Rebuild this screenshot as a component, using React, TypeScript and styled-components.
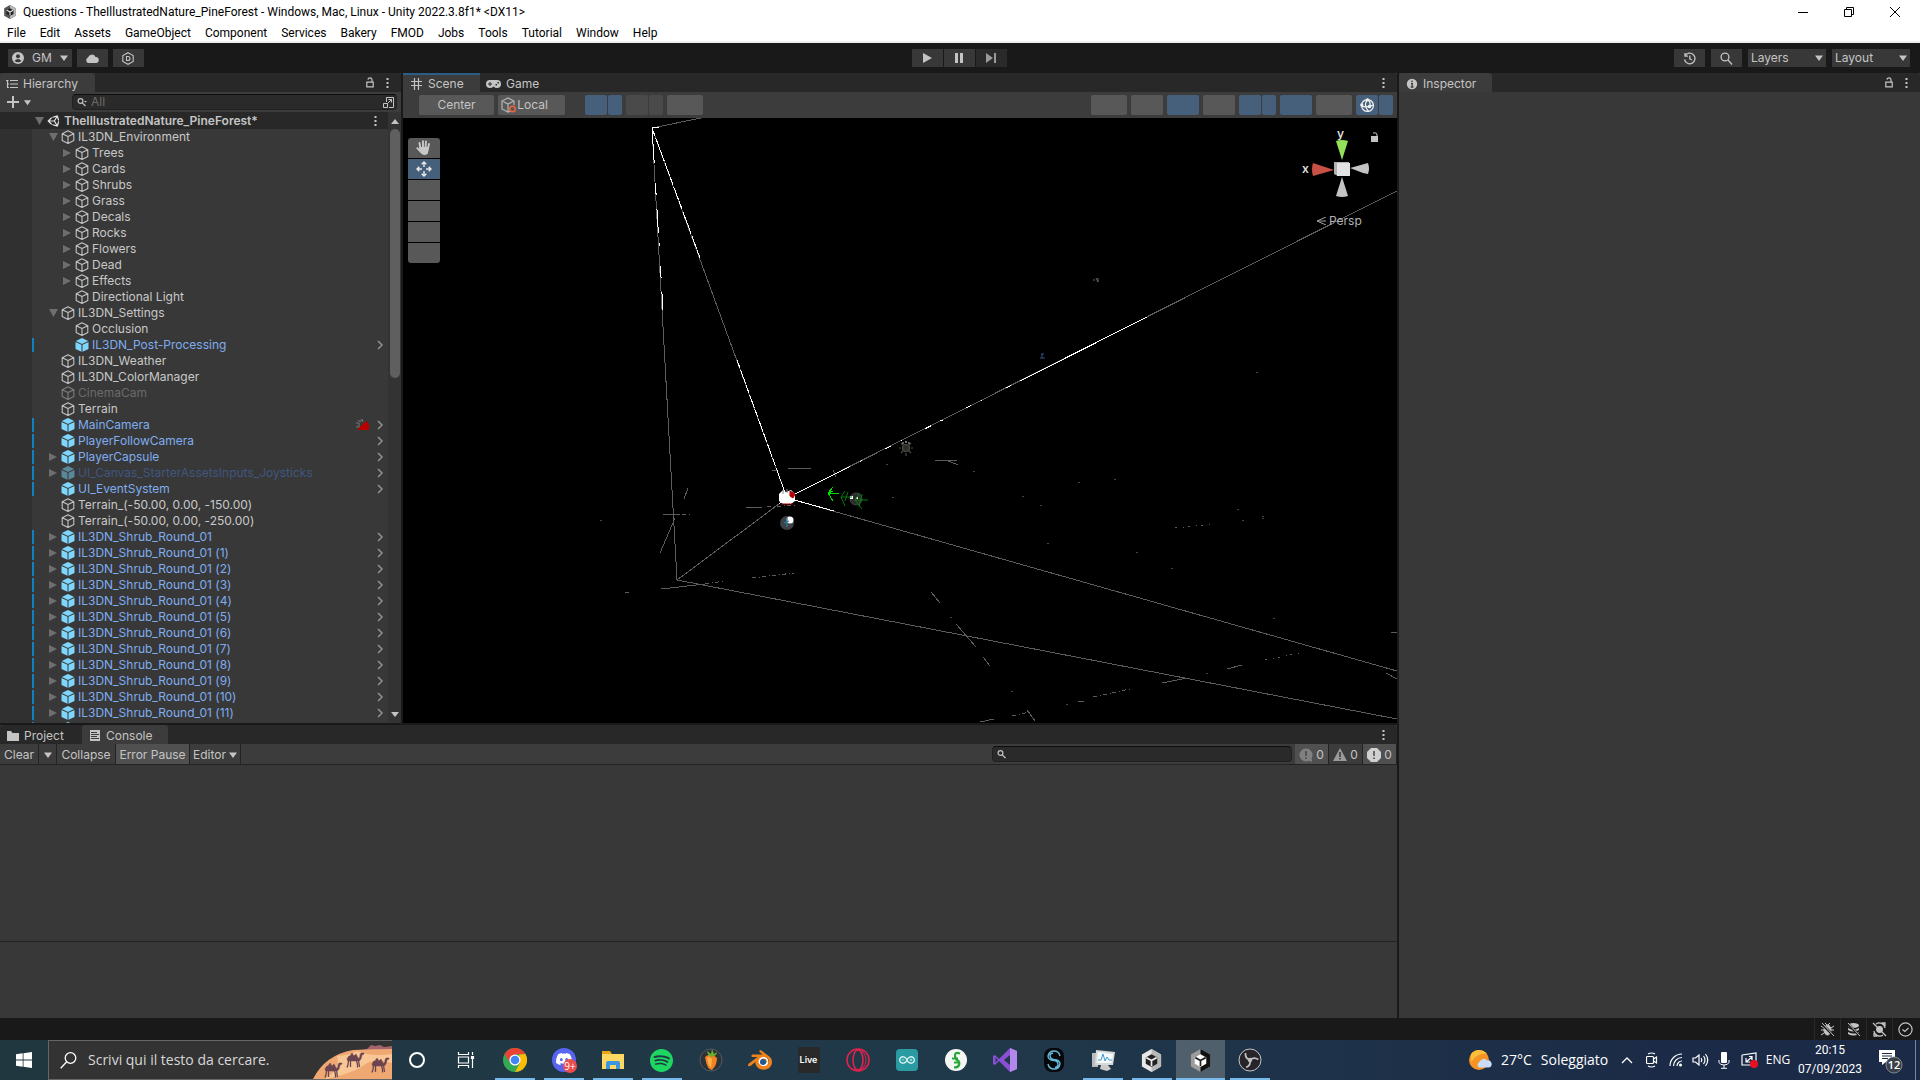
import React from "react";
import styled, { createGlobalStyle, css } from "styled-components";
import { FaUnity } from "react-icons/fa";
import { SiSpotify, SiBlender, SiArduino, SiDiscord } from "react-icons/si";

const ui = `Inter, "Liberation Sans", sans-serif`;
const win = `"Open Sans", "Noto Sans", sans-serif`;
const winSmall = `Roboto, "Open Sans", sans-serif`;

const GlobalStyle = createGlobalStyle`
  * { box-sizing: border-box; }
  body { margin: 0; background: #191919; overflow: hidden; }
  button, input, select { font: inherit; color: inherit; border: 0; margin: 0; padding: 0; background: none; border-radius: 0; }
  svg { display: block; flex: none; }
  ul { list-style: none; margin: 0; padding: 0; }
`;

const Shell = styled.div`
  display: flex;
  flex-direction: column;
  height: 100vh;
  font: 12px/16px ${ui};
  font-feature-settings: "calt" 0;
  color: #c4c4c4;
  background: #191919;
`;

/* ---------- window chrome ---------- */
const TitleBar = styled.header`
  display: flex;
  align-items: center;
  height: 23px;
  flex: none;
  background: #fff;
  color: #000;
  font: 12px/16px ${winSmall};
  padding: 0 2px 0 3px;
  gap: 6px;
`;
const TitleText = styled.span`
  flex: 1;
  white-space: nowrap;
`;
const WindowButton = styled.button`
  width: 46px;
  height: 20px;
  display: grid;
  place-items: center;
`;
const MenuBar = styled.nav`
  display: flex;
  align-items: center;
  height: 20px;
  flex: none;
  background: #fff;
  border-bottom: 2px solid #f0f0f0;
  color: #000;
  font: 12px/18px ${winSmall};
`;
const MenuItem = styled.button`
  padding: 1px 7px 0;
  height: 18px;
`;

/* ---------- top toolbar ---------- */
const TopBar = styled.div`
  display: grid;
  grid-template-columns: 1fr auto 1fr;
  align-items: center;
  height: 30px;
  flex: none;
  padding: 0 10px 0 8px;
`;
const Group = styled.div<{ $gap?: number; $end?: boolean }>`
  display: flex;
  align-items: center;
  gap: ${(p) => p.$gap ?? 5}px;
  justify-content: ${(p) => (p.$end ? "flex-end" : "flex-start")};
`;
const BarButton = styled.button<{ $dim?: boolean }>`
  display: flex;
  align-items: center;
  justify-content: center;
  gap: 8px;
  height: 18px;
  min-width: 31px;
  padding: 0 4px;
  background: ${(p) => (p.$dim ? "#2a2a2a" : "#383838")};
  color: ${(p) => (p.$dim ? "#9a9a9a" : "#c4c4c4")};
`;
const SelectWrap = styled.label`
  position: relative;
  display: flex;
  align-items: center;
  width: 78px;
  height: 18px;
  background: #383838;
  select {
    appearance: none;
    width: 100%;
    padding-left: 3px;
    height: 18px;
    outline: none;
  }
  svg {
    position: absolute;
    right: 3px;
    pointer-events: none;
  }
`;

/* ---------- docking ---------- */
const Workspace = styled.main`
  flex: 1;
  min-height: 0;
  display: grid;
  grid-template-columns: minmax(0, 1397fr) minmax(0, 521fr);
  gap: 2px;
`;
const LeftArea = styled.div`
  display: grid;
  grid-template-rows: minmax(0, 650fr) minmax(0, 293fr);
  gap: 2px;
  min-height: 0;
`;
const UpperArea = styled.div`
  display: grid;
  grid-template-columns: minmax(0, 401fr) minmax(0, 994fr);
  gap: 2px;
  min-height: 0;
`;
const Panel = styled.section`
  display: flex;
  flex-direction: column;
  min-height: 0;
  min-width: 0;
  background: #383838;
`;
const TabStrip = styled.div`
  display: flex;
  height: 19px;
  flex: none;
  background: #282828;
  border-radius: 3px 3px 0 0;
  padding-right: 12px;
`;
const Tab = styled.button<{ $active?: boolean; $focus?: boolean; $w: number }>`
  display: flex;
  align-items: center;
  gap: 5px;
  width: ${(p) => p.$w}px;
  padding: 2px 0 0 6px;
  border-radius: 3px 3px 0 0;
  ${(p) => p.$active && css`background: #3c3c3c;`}
  ${(p) => p.$focus && css`border-top: 2px solid #2c5d87; border-radius: 0; padding-top: 0;`}
`;
const TabActions = styled.div`
  margin-left: auto;
  display: flex;
  align-items: center;
  gap: 12px;
`;
const IconButton = styled.button`
  display: grid;
  place-items: center;
  flex: none;
`;
const ToolRow = styled.div<{ $h: number }>`
  display: flex;
  align-items: center;
  height: ${(p) => p.$h}px;
  flex: none;
  background: #3c3c3c;
`;

/* ---------- hierarchy ---------- */
const AddButton = styled.button`
  display: flex;
  align-items: center;
  gap: 5px;
  width: 72px;
  padding-left: 7px;
  flex: none;
`;
const SearchField = styled.label<{ $h: number }>`
  display: flex;
  align-items: center;
  gap: 4px;
  height: ${(p) => p.$h}px;
  padding: 0 2px 0 4px;
  border: 1px solid #212121;
  border-top-color: #0d0d0d;
  border-radius: 4px;
  background: #2a2a2a;
  input {
    flex: 1;
    min-width: 0;
    height: 14px;
    outline: none;
  }
  input::placeholder {
    color: #6c6c6c;
    opacity: 1;
  }
`;
const HierarchySearch = styled(SearchField)`
  flex: 1;
  margin-right: 4px;
`;
const TreeArea = styled.div`
  flex: 1;
  min-height: 0;
  display: grid;
  grid-template-columns: minmax(0, 1fr) 13px;
`;
const Tree = styled.ul`
  overflow: hidden;
  min-height: 0;
  background: linear-gradient(to right, #303030 32px, #383838 32px);
`;
const SceneHeader = styled.li`
  display: flex;
  align-items: center;
  height: 17px;
  padding: 1px 0 0 32px;
  background: #282828;
  font-weight: 600;
`;
const Row = styled.li<{ $level: number; $prefab: boolean; $off?: boolean }>`
  display: flex;
  align-items: center;
  height: 16px;
  margin-left: 32px;
  padding-left: ${(p) => 14 + p.$level * 14}px;
  color: ${(p) => (p.$prefab ? (p.$off ? "#415680" : "#7fadef") : p.$off ? "#6a6a6a" : "#c8c8c8")};
  ${(p) => p.$prefab && css`background: linear-gradient(#0f81be, #0f81be) 0 1px / 2px 14px no-repeat;`}
`;
const Foldout = styled.button`
  width: 14px;
  height: 16px;
  padding-left: 3px;
  display: flex;
  align-items: center;
  flex: none;
`;
const RowIcon = styled.span<{ $off?: boolean }>`
  width: 18px;
  padding-left: 1px;
  flex: none;
  opacity: ${(p) => (p.$off ? 0.5 : 1)};
`;
const RowText = styled.span`
  flex: 1;
  white-space: nowrap;
`;
const RowEnd = styled.span`
  display: flex;
  align-items: center;
  gap: 6px;
  padding-right: 4px;
`;
const SceneMenu = styled(IconButton)`
  padding-right: 7px;
`;
const ScrollTrack = styled.div`
  display: flex;
  flex-direction: column;
  align-items: center;
  background: #333;
  padding: 7px 0 6px;
  min-height: 0;
`;
const ScrollBody = styled.div`
  flex: 1;
  margin: 5px 0;
`;
const Thumb = styled.div`
  width: 10px;
  height: 43%;
  border-radius: 5px;
  background: #5f5f5f;
`;

/* ---------- scene ---------- */
const SceneTools = styled(ToolRow)`
  padding: 0 4px 0 16px;
  gap: 4px;
`;
const Space = styled.span<{ $w?: number }>`
  ${(p) => (p.$w ? css`width: ${p.$w}px;` : css`flex: 1;`)}
`;
const SceneButton = styled.button<{ $w: number; $tone?: "blue" | "dim" }>`
  display: flex;
  align-items: center;
  justify-content: center;
  width: ${(p) => p.$w}px;
  height: 20px;
  border-radius: 2px;
  background: ${(p) => (p.$tone === "blue" ? "#46607c" : p.$tone === "dim" ? "#4a4a4a" : "#585858")};
  flex: none;
`;
const Split = styled.div`
  display: flex;
  gap: 1px;
`;
const Viewport = styled.div`
  position: relative;
  flex: 1;
  min-height: 0;
  background: #000;
  overflow: hidden;
`;
const SceneDrawing = styled.svg`
  width: 100%;
  height: 100%;
`;
const ToolPalette = styled.div`
  position: absolute;
  left: 5px;
  top: 20px;
  display: grid;
  gap: 1px;
  border-radius: 3px;
  overflow: hidden;
`;
const PaletteButton = styled.button<{ $on?: boolean }>`
  display: grid;
  place-items: center;
  width: 32px;
  height: 20px;
  background: ${(p) => (p.$on ? "#46607c" : "#585858")};
`;
const Gizmo = styled.div`
  position: absolute;
  right: 12px;
  top: 4px;
  width: 84px;
`;
const ProjectionButton = styled.button`
  display: flex;
  align-items: center;
  gap: 3px;
  margin: 7px 0 0 15px;
  color: #b4b4b4;
`;

/* ---------- console ---------- */
const ConsoleTools = styled(ToolRow)`
  border-bottom: 1px solid #232323;
`;
const ConsoleButton = styled.button<{ $w: number; $on?: boolean }>`
  display: flex;
  align-items: center;
  justify-content: center;
  gap: 3px;
  width: ${(p) => p.$w}px;
  height: 20px;
  padding-top: 1px;
  border-right: 1px solid #232323;
  background: ${(p) => (p.$on ? "#505050" : "transparent")};
  flex: none;
`;
const ConsoleSearch = styled(SearchField)`
  width: 300px;
  margin: 0 3px 0 auto;
`;
const ConsoleBody = styled.div`
  flex: 1;
  display: grid;
  grid-template-rows: 177fr 76fr;
`;
const ConsoleList = styled.div`
  border-bottom: 1px solid #232323;
`;

/* ---------- status bar ---------- */
const StatusBar = styled.footer`
  display: flex;
  justify-content: flex-end;
  height: 22px;
  padding-right: 2px;
  flex: none;
`;
const StatusButton = styled.button`
  width: 26px;
  display: grid;
  place-items: center;
  border-left: 1px solid #2a2a2a;
`;

/* ---------- taskbar ---------- */
const Taskbar = styled.div`
  display: flex;
  align-items: stretch;
  height: 40px;
  flex: none;
  color: #fff;
  background: linear-gradient(to right, #21373f, #20394a 50%, #1b2a47 90%);
  font: 14px/20px ${win};
`;
const StartButton = styled.button`
  width: 48px;
  display: grid;
  place-items: center;
`;
const TaskSearch = styled.label`
  display: flex;
  align-items: center;
  width: 344px;
  padding-left: 11px;
  gap: 11px;
  background: #333;
  border: 1px solid #666;
  border-right: 0;
  input {
    flex: 1;
    min-width: 0;
    outline: none;
  }
  input::placeholder {
    color: #d8d8d8;
    opacity: 1;
  }
`;
const TaskButton = styled.button<{ $open?: boolean; $active?: boolean }>`
  width: 49px;
  display: grid;
  place-items: center;
  ${(p) =>
    p.$open &&
    css`
      background: linear-gradient(#76b9ed, #76b9ed) bottom / ${p.$active ? "100%" : "40px"} 2px no-repeat,
        ${p.$active ? "#4f5f6b" : "transparent"};
    `}
`;
const Tray = styled.div`
  display: flex;
  align-items: center;
  margin-left: auto;
`;
const Weather = styled.button`
  display: flex;
  align-items: center;
  gap: 9px;
  width: 145px;
`;
const TrayButton = styled.button<{ $w: number }>`
  width: ${(p) => p.$w}px;
  display: grid;
  place-items: center;
  font-size: 12px;
`;
const Clock = styled.button`
  width: 72px;
  font: 12px/19px ${winSmall};
  text-align: center;
`;
const Notice = styled.button`
  width: 42px;
  margin: 0 3px 0 4px;
  display: grid;
  place-items: center;
`;
const DesktopEdge = styled.div`
  width: 5px;
  align-self: stretch;
  border-left: 1px solid #7b8494;
`;

/* ---------- shared icons ---------- */
const Down = ({ s = 8, c = "#c4c4c4" }: { s?: number; c?: string }) => (
  <svg width={s} height={s} viewBox="0 0 8 8"><path d="M0 1.500h8L4 7z" fill={c} /></svg>
);
const Right = () => (
  <svg width="8" height="8" viewBox="0 0 8 8"><path d="M0 0v8l8-4z" fill="#6e6e6e" /></svg>
);
const DownFold = () => (
  <svg width="9" height="8" viewBox="0 0 9 8"><path d="M0 0h9L4.500 8z" fill="#6e6e6e" /></svg>
);
const Kebab = () => (
  <svg width="3" height="12" viewBox="0 0 3 12" fill="#c4c4c4"><path d="M.5 1h2v2h-2zM.5 5h2v2h-2zM.5 9h2v2h-2z" /></svg>
);
const Lock = () => (
  <svg width="8" height="11" viewBox="0 0 8 11" fill="none" stroke="#c4c4c4" strokeWidth="1.200">
    <path d="M.8 5.200h6.400v4.600H.8zM6 5V3a2 2 0 0 0-4-.4" />
  </svg>
);
const Cube = () => (
  <svg width="14" height="16" viewBox="0 0 14 16" fill="none" stroke="#c4c4c4" strokeWidth="1.100" strokeLinejoin="round">
    <path d="M7 1.800l5.800 2.900v6.700L7 14.400l-5.800-3V4.700zM1.200 4.700L7 7.600l5.800-2.900M7 7.600v6.800" />
  </svg>
);
const PrefabCube = () => (
  <svg width="14" height="16" viewBox="0 0 14 16">
    <path d="M7 1l6.200 3L7 7 .8 4z" fill="#7fd6fd" />
    <path d="M.5 5l6 2.800v7L.5 12z M13.500 5l-6 2.800v7l6-2.800z" fill="#7fd6fd" />
  </svg>
);
const Chevron = () => (
  <svg width="8" height="10" viewBox="0 0 8 10" fill="none" stroke="#909090" strokeWidth="1.500"><path d="M2 1l4 4-4 4" /></svg>
);
const Magnifier = ({ arrow }: { arrow?: boolean }) => (
  <svg width="10" height="10" viewBox="0 0 10 10" fill="none" stroke="#c4c4c4" strokeWidth="1.200">
    <circle cx="3.500" cy="4" r="2.400" /><path d="M5.300 5.800L8.500 9" />{arrow && <path d="M7 4h3L8.500 5.600z" fill="#c4c4c4" stroke="none" />}
  </svg>
);
const UnityHex = ({ s, light = "#e8e8e8", dark = "#222", flip }: { s: number; light?: string; dark?: string; flip?: boolean }) => (
  <svg width={s} height={s} viewBox="0 0 24 24">
    <path d="M12 0l10 5.700v12.600L12 24 2 18.300V5.700z" fill={flip ? "#9c9c9c" : light} />
    <path d="M12 0l10 5.700v12.600L12 24z" fill={flip ? "#111" : "#b8b8b8"} />
    <path d="M12 5.500l6 3.300v6.600L12 18.800l-6-3.400V8.800z" fill={flip ? "#fff" : dark} />
    <path d="M12 12v6M12 12L6.600 9M12 12l5.400-3" stroke={flip ? "#222" : "#e8e8e8"} strokeWidth="1.800" />
  </svg>
);

/* ---------- data ---------- */
type Item = { t: string; l?: number; f?: "open" | "closed"; k?: "prefab"; off?: boolean; cam?: boolean };
const shrubs: Item[] = Array.from({ length: 12 }, (_, i) => ({
  t: "IL3DN_Shrub_Round_01" + (i ? ` (${i})` : ""), f: "closed", k: "prefab",
}));
const items: Item[] = [
  { t: "IL3DN_Environment", f: "open" },
  ...["Trees", "Cards", "Shrubs", "Grass", "Decals", "Rocks", "Flowers", "Dead", "Effects"].map(
    (t): Item => ({ t, l: 1, f: "closed" })
  ),
  { t: "Directional Light", l: 1 },
  { t: "IL3DN_Settings", f: "open" },
  { t: "Occlusion", l: 1 },
  { t: "IL3DN_Post-Processing", l: 1, k: "prefab" },
  { t: "IL3DN_Weather" },
  { t: "IL3DN_ColorManager" },
  { t: "CinemaCam", off: true },
  { t: "Terrain" },
  { t: "MainCamera", k: "prefab", cam: true },
  { t: "PlayerFollowCamera", k: "prefab" },
  { t: "PlayerCapsule", k: "prefab", f: "closed" },
  { t: "UI_Canvas_StarterAssetsInputs_Joysticks", k: "prefab", f: "closed", off: true },
  { t: "UI_EventSystem", k: "prefab" },
  { t: "Terrain_(-50.00, 0.00, -150.00)" },
  { t: "Terrain_(-50.00, 0.00, -250.00)" },
  ...shrubs,
];
const menus = ["File", "Edit", "Assets", "GameObject", "Component", "Services", "Bakery", "FMOD", "Jobs", "Tools", "Tutorial", "Window", "Help"];

const dots = [
  [950, 617], [1011, 691], [1066, 704], [1206, 673], [1242, 520], [1262, 516], [1262, 518], [1237, 509], [1136, 552],
  [1171, 568], [1047, 543], [1040, 505], [1022, 496], [973, 471], [886, 464], [892, 497], [1078, 482], [1114, 479],
  [1273, 618], [1256, 372], [600, 520],
];

function SceneLines() {
  return (
    <SceneDrawing viewBox="403 118 994 605" preserveAspectRatio="xMinYMin slice" aria-label="Scene view" fill="none">
      <g shapeRendering="crispEdges" stroke="#5c5c5c" strokeWidth="1">
        <path d="M652 128L701 118M652 128L677 580M652 128L787 498M677 580L787 498M677 580L1397 719M787 498L1397 671M787 498L1397 191" />
        <path d="M772 470h6M788 469l23-1M688 488l-4 11M746 508l16-1M663 515l17-1M675 518l-15 35M661 589l44-5M625 592h4M931 592l9 11M956 624l20 23M983 657l7 9M980 722l14-3M1027 710l8 11M1078 702l6-1M1162 683l25-5M1227 669l15-4M1386 673l11 6M1391 632h6M935 460h22M946 460l12 5M833 470l3 7" />
        <path strokeDasharray="4 3 1 2" d="M767 507l30-2M682 514h9M705 584l19-3M752 578l42-5M1012 716l18-4M1093 697l37-8" />
        <path strokeDasharray="2 6 1 4" d="M1265 660l34-7M1175 528l37-4" />
      </g>
      <g shapeRendering="crispEdges" stroke="#fff" strokeWidth="1">
        <path d="M652 128L654 160M652 128L659 127M783 501L779 504M787 498L845 469M787 498L834 511M1020 381L1147 317" />
        <path d="M654 160L663 310" strokeDasharray="3 20 12 14 24 10" />
        <path d="M652 128L700 258M737 360L787 498" strokeDasharray="9 2 14 1" />
        <path d="M845 469L1020 381" strokeDasharray="6 11 2 26" />
      </g>
      <g fill="#444" shapeRendering="crispEdges">
        {dots.map(([x, y]) => <rect key={`${x}-${y}`} x={x} y={y} width="2" height="1" />)}
      </g>
      <path d="M779 494l4-4 3 2 5-2 4 4v7l-4 3h-8l-4-3z" fill="#fff" />
      <path d="M790 491l5 3-2 4-3-2zM781 504h12" fill="#b00" stroke="#a00" />
      <path d="M783 490v4M787 489v4" stroke="#888" />
      <circle cx="787" cy="523" r="7" fill="#3d4145" />
      <circle cx="790" cy="520" r="3.500" fill="#fff" />
      <path d="M787 518v9M784 523l5-2" stroke="#2b7da5" strokeWidth="1.300" />
      <g stroke="#4c4c48" strokeWidth="1.200">
        <circle cx="906" cy="448" r="3.500" fill="#2e2e26" /><path d="M906 441v2M906 453v3M899 448h2M911 448h2M901 443l2 2M911 443l-2 2M901 453l2-2M911 453l-2-2" />
        <path d="M902 443h2M905 442h2M908 443h2" stroke="#bbb" />
      </g>
      <circle cx="856" cy="499" r="6" fill="#2c2c2c" stroke="#444" />
      <path d="M850 496h3v3h-3zM856 497h2v2h-2z" fill="#fff" />
      <path d="M839 493H828M833 487l-5 6 5 8M828 493l5-2" stroke="#0d0" strokeWidth="1" shapeRendering="crispEdges" />
      <path d="M852 497H841M845 491l-4 6 4 9M868 500H855M860 493l-5 7 7 9M848 492l-3 9M862 494l-3 13" stroke="#087a10" />
      <path d="M1093 280h2M1096 278l2 4M1098 278v4" stroke="#666" />
      <path d="M1041 354h3M1042 354v4M1040 358h5" stroke="#2d5585" />
    </SceneDrawing>
  );
}

function AxisGizmo() {
  return (
    <Gizmo>
      <svg width="84" height="84" viewBox="1301 122 84 84" aria-label="Orientation">
        <path d="M1336 141q6-2 12 0l-6 19z" fill="#93e05a" />
        <path d="M1313 163q-2 6 0 13l21-6z" fill="#c75145" />
        <path d="M1368 163q2 6 0 11l-5-1-13-5z" fill="#c4c4c4" />
        <path d="M1336 196q6 2 12 0l-6-19z" fill="#c4c4c4" />
        <path d="M1334 162h15l1 14h-12l-4-2z" fill="#b0b0b0" /><path d="M1337 163h13v13h-13z" fill="#e2e2e4" />
        <text x="1337" y="138" fill="#ddd" fontSize="12" fontWeight="600">y</text>
        <text x="1302" y="173" fill="#ddd" fontSize="12" fontWeight="600">x</text>
        <path d="M1371 136h7v6h-7z" fill="#c4c4c4" /><path d="M1377 136v-2q-2-2-4-1" fill="none" stroke="#c4c4c4" />
      </svg>
      <ProjectionButton>
        <svg width="10" height="8" viewBox="0 0 10 8" fill="none" stroke="#a0a0a0"><path d="M10 0L1 4h9M1 4l9 4" /></svg>
        Persp
      </ProjectionButton>
    </Gizmo>
  );
}

const Chrome = () => (
  <svg width="24" height="24" viewBox="0 0 24 24">
    <circle cx="12" cy="12" r="12" fill="#34a853" />
    <path d="M1.600 6A12 12 0 0 1 22.400 6L12 6.500 7 9l-.5 5z" fill="#ea4335" />
    <path d="M22.400 6A12 12 0 0 1 12 24l5-9-1-8.500z" fill="#fbbc04" />
    <circle cx="12" cy="12" r="5.600" fill="#fff" /><circle cx="12" cy="12" r="4.300" fill="#4285f4" />
  </svg>
);
const Discord = () => (
  <svg width="26" height="26" viewBox="0 0 26 26">
    <circle cx="13" cy="13" r="12" fill="#5865f2" />
    <g transform="translate(5 4)"><SiDiscord size={16} color="#fff" /></g>
    <circle cx="19" cy="19" r="7" fill="#ed4c4c" />
    <text x="19" y="23" fontSize="10" fill="#fff" textAnchor="middle">9+</text>
  </svg>
);
const Explorer = () => (
  <svg width="22" height="18" viewBox="0 0 22 18">
    <path d="M0 0h8l2 3h12v4H0z" fill="#e8a514" /><path d="M0 3h22v15H0z" fill="#ffd864" />
    <path d="M4 18v-6q0-2 2-2h10q2 0 2 2v6h-4v-4H8v4z" fill="#3a96dd" />
  </svg>
);
const FruityLoops = () => (
  <svg width="24" height="24" viewBox="0 0 24 24">
    <circle cx="12" cy="12" r="11" fill="#2c3338" stroke="#535b60" />
    <path d="M6 9q6-5 12 1 0 7-5 12-5 0-7-13z" fill="#f58220" /><path d="M8 10q3-2 5 1l-1 9q-3-3-4-10z" fill="#ffb04d" />
    <path d="M12 9Q8 6 8 3l4 3 1-5 2 5 3-2q0 4-6 5z" fill="#66b32e" />
  </svg>
);
const Blender = () => (
  <svg width="24" height="24" viewBox="0 0 24 24">
    <circle cx="15" cy="14" r="5.500" fill="#fff" />
    <g transform="translate(0 0)"><SiBlender size={24} color="#f0821c" /></g>
    <circle cx="15" cy="14" r="3" fill="#1f5a96" />
  </svg>
);
const Ableton = styled.span`
  width: 22px;
  height: 26px;
  background: #292929;
  font: 600 9px/26px ${ui};
`;
const Opera = () => (
  <svg width="24" height="24" viewBox="0 0 24 24" fill="none" stroke="#e0224e" strokeWidth="1.600">
    <circle cx="12" cy="12" r="11" /><ellipse cx="12" cy="12" rx="5" ry="10" /><path d="M16 2.500q8 9.500 0 19" strokeWidth="1" />
  </svg>
);
const ArduinoBox = styled.span`
  width: 22px;
  height: 22px;
  border-radius: 4px;
  display: grid;
  place-items: center;
  background: #2a9ba0;
`;
const Dollar = () => (
  <svg width="22" height="22" viewBox="0 0 22 22">
    <circle cx="11" cy="11" r="11" fill="#f4f6f4" />
    <path d="M15 4.500q-5-2-5 2t3 5q2 2 1 4.500t-5 2.500M7 9.500h6M9 13.500h5" fill="none" stroke="#27a737" strokeWidth="2.200" />
  </svg>
);
const VisualStudio = () => (
  <svg width="24" height="24" viewBox="0 0 24 24">
    <path d="M17 0l7 3v18l-7 3L6 13l-4 4-2-1V8l2-1 4 4zM2.500 9.500v5L5 12zM17 7l-6 5 6 5z" fill="#8a4fd3" fillRule="evenodd" />
    <path d="M17 0l7 3v18l-7 3z" fill="#b487ea" />
  </svg>
);
const SIcon = () => (
  <svg width="22" height="24" viewBox="0 0 22 24" fill="none">
    <rect x="1" width="20" height="24" rx="8" fill="#050709" />
    <path d="M17 8q-1-5-6-5T5 8q0 4 6 4.500 4 .5 4 4 0 2.500-3 3M5 16q1 5 6 5t6-5q0-4-6-4.500-4-.5-4-4Q7 5.500 10 5" stroke="#62b9dc" strokeWidth="1.400" />
  </svg>
);
const Monitor = () => (
  <svg width="24" height="24" viewBox="0 0 24 24">
    <path d="M1 5h6v14H1z" fill="#b9bdbf" /><path d="M5 2l19 2-2 13H4z" fill="#d7dadb" /><path d="M7 4l15 2-1.500 9H6z" fill="#f4f9fc" />
    <path d="M7 12h3l2-6 2 7 2-4 2 3h3" fill="none" stroke="#3e9ad0" /><path d="M10 17h7l3 4-4 2-7-2z" fill="#ccc" />
  </svg>
);
const Obs = () => (
  <svg width="24" height="24" viewBox="0 0 24 24">
    <circle cx="12" cy="12" r="11" fill="#26242a" stroke="#c4c4c4" />
    <g fill="none" stroke="#bdbdbd" strokeWidth="1.800">
      <path id="blade" d="M12 12q-5-1.500-4.500-7" />
      <path d="M12 12q-5-1.500-4.500-7" transform="rotate(120 12 12)" />
      <path d="M12 12q-5-1.500-4.500-7" transform="rotate(240 12 12)" />
    </g>
    <circle cx="12" cy="12" r="2.200" fill="#bdbdbd" />
  </svg>
);
const CircleRing = () => (
  <svg width="18" height="18" viewBox="0 0 18 18"><circle cx="9" cy="9" r="7" fill="none" stroke="#fff" strokeWidth="2" /></svg>
);
const TaskView = () => (
  <svg width="18" height="16" viewBox="0 0 18 16" fill="none" stroke="#fff" strokeWidth="1.200">
    <path d="M1.500 0v2.500h10V0M1.500 5h10v6h-10zM1.500 16v-2.500h10V16M15.500 0v3M15.500 7v9" /><path d="M14.500 4.500h2v2h-2z" fill="#fff" />
  </svg>
);
const Camels = () => (
  <svg width="79" height="38" viewBox="0 -7 79 38">
    <path d="M44 3l10-2 4-4 4 1 5-1 4 2 8-1v29H50z" fill="#a3656b" />
    <path d="M0 31Q12 7 40 2q20-1 39-1v30z" fill="#f0a873" />
    <path d="M24 8q14-1 20-5 14 6 35 3v9q-18-6-28 2T12 31q16-10 12-23z" fill="#f8c795" />
    <g fill="none" stroke="#6b4450" strokeWidth="1.300">
      {[[11, 14], [33, 4], [58, 9]].map(([x, y]) => (
        <g key={x} transform={`translate(${x} ${y})`}>
          <path d="M1 7q2-4 3-3l2-3 2 3 2-2 2 4q2 1 2-3l1-2 3 0v1l-2 1-1 4q-1 2-3 2H3q-2 0-2-2z" fill="#6b4450" strokeWidth=".5" />
          <path d="M2.500 8L2 12.500l-1 3M4.500 9l0 6M10.500 9l1 3v3.500M12.500 8l1 7" />
        </g>
      ))}
    </g>
  </svg>
);

const tasks: [string, React.ReactNode, boolean?, boolean?][] = [
  ["Cortana", <CircleRing />],
  ["Task view", <TaskView />],
  ["Chrome", <Chrome />, true],
  ["Discord", <Discord />, true],
  ["Explorer", <Explorer />, true],
  ["Spotify", <SiSpotify size={23} color="#1ed760" />, true],
  ["FL Studio", <FruityLoops />],
  ["Blender", <Blender />],
  ["Ableton Live", <Ableton>Live</Ableton>],
  ["Opera GX", <Opera />],
  ["Arduino", <ArduinoBox><SiArduino size={16} color="#d9f2f2" /></ArduinoBox>],
  ["Finance", <Dollar />],
  ["Visual Studio", <VisualStudio />],
  ["Streaming", <SIcon />],
  ["Performance", <Monitor />, true],
  ["Unity Hub", <UnityHex s={23} />, true],
  ["Unity", <UnityHex s={23} flip />, true, true],
  ["OBS Studio", <Obs />, true],
];

export default function App() {
  return (
    <Shell>
      <GlobalStyle />
      <TitleBar>
        <UnityHex s={14} light="#555" />
        <TitleText>Questions - TheIllustratedNature_PineForest - Windows, Mac, Linux - Unity 2022.3.8f1* &lt;DX11&gt;</TitleText>
        <Group $gap={0}>
          <WindowButton aria-label="Minimize"><svg width="10" height="10" stroke="#000"><path d="M0 5.500h10" /></svg></WindowButton>
          <WindowButton aria-label="Restore"><svg width="10" height="10" fill="none" stroke="#000"><path d="M.5 2.500h7v7h-7zM2.500 2.500v-2h7v7h-2" /></svg></WindowButton>
          <WindowButton aria-label="Close"><svg width="10" height="10" stroke="#000"><path d="M0 0l10 10M10 0L0 10" /></svg></WindowButton>
        </Group>
      </TitleBar>
      <MenuBar>{menus.map((m) => <MenuItem key={m}>{m}</MenuItem>)}</MenuBar>

      <TopBar>
        <Group>
          <BarButton>
            <svg width="12" height="12" viewBox="0 0 12 12"><circle cx="6" cy="6" r="6" fill="#c4c4c4" /><circle cx="6" cy="4.200" r="2" fill="#383838" /><path d="M2.500 9q3.500-4 7 0-3.500 2.500-7 0z" fill="#383838" /></svg>
            GM <Down />
          </BarButton>
          <BarButton aria-label="Cloud"><svg width="14" height="10" viewBox="0 0 14 10"><path d="M3 10a3 3 0 0 1 0-5.500A4 4 0 0 1 10.500 4 3 3 0 0 1 11 10z" fill="#c4c4c4" /></svg></BarButton>
          <BarButton aria-label="Version control"><svg width="12" height="13" viewBox="0 0 12 13" fill="none" stroke="#c4c4c4" strokeWidth="1.100"><path d="M6 .7l5.200 2.900v5.800L6 12.300.8 9.400V3.600z" /><path d="M4.500 4.500h1.500q2 0 2 2t-2 2H4.500z" /></svg></BarButton>
        </Group>
        <Group $gap={1}>
          <BarButton aria-label="Play"><svg width="9" height="10"><path d="M0 0l9 5-9 5z" fill="#c4c4c4" /></svg></BarButton>
          <BarButton aria-label="Pause"><svg width="8" height="10"><path d="M0 0h3v10H0zM5 0h3v10H5z" fill="#c4c4c4" /></svg></BarButton>
          <BarButton aria-label="Step" $dim><svg width="10" height="10"><path d="M0 0l7 5-7 5zM8 0h2v10H8z" fill="#9a9a9a" /></svg></BarButton>
        </Group>
        <Group $end $gap={6}>
          <BarButton aria-label="Undo history"><svg width="13" height="13" viewBox="0 0 13 13" fill="none" stroke="#c4c4c4" strokeWidth="1.300"><path d="M2 4a5.300 5.300 0 1 1-.5 3.500M2 1v3.200h3M6.800 3.500v3.300l2 1.200" /></svg></BarButton>
          <BarButton aria-label="Search"><svg width="13" height="13" viewBox="0 0 13 13" fill="none" stroke="#c4c4c4" strokeWidth="1.300"><circle cx="5" cy="5" r="3.900" /><path d="M8 8l4 4.500" /></svg></BarButton>
          <SelectWrap><select aria-label="Layers"><option>Layers</option></select><Down /></SelectWrap>
          <SelectWrap><select aria-label="Layout"><option>Layout</option></select><Down /></SelectWrap>
        </Group>
      </TopBar>

      <Workspace>
        <LeftArea>
          <UpperArea>
            <Panel>
              <TabStrip>
                <Tab $active $w={95}>
                  <svg width="12" height="10" viewBox="0 0 12 10" stroke="#c4c4c4" strokeWidth="1.200"><path d="M4 1.500h8M4 5h8M4 8.500h8M0 1.500h2.500M1.500 1v7.500H3M1.500 5H3" fill="none" /></svg>
                  Hierarchy
                </Tab>
                <TabActions><IconButton aria-label="Lock"><Lock /></IconButton><IconButton aria-label="More"><Kebab /></IconButton></TabActions>
              </TabStrip>
              <ToolRow $h={20}>
                <AddButton aria-label="Create">
                  <svg width="12" height="12" stroke="#c4c4c4" strokeWidth="2"><path d="M6 0v12M0 6h12" /></svg><Down s={7} />
                </AddButton>
                <HierarchySearch $h={16}>
                  <Magnifier arrow />
                  <input aria-label="Search hierarchy" placeholder="All" />
                  <svg width="11" height="11" viewBox="0 0 11 11" fill="none" stroke="#c4c4c4"><path d="M3.500 5V.5h7v10H6M.5 6.500h4v4h-4zM4.500 6.500l4-4M5.500 2.500h3v3" /></svg>
                </HierarchySearch>
              </ToolRow>
              <TreeArea>
                <Tree>
                  <SceneHeader>
                    <Foldout aria-label="Toggle scene"><DownFold /></Foldout>
                    <RowIcon><FaUnity size={14} color="#e4e4e4" /></RowIcon>
                    <RowText>TheIllustratedNature_PineForest*</RowText>
                    <SceneMenu aria-label="Scene menu"><Kebab /></SceneMenu>
                    <RowEnd />
                  </SceneHeader>
                  {items.map((i) => (
                    <Row key={i.t} $level={i.l ?? 0} $prefab={!!i.k} $off={i.off}>
                      <Foldout as={i.f ? "button" : "span"} aria-label={i.f ? `Toggle ${i.t}` : undefined}>
                        {i.f === "open" ? <DownFold /> : i.f ? <Right /> : null}
                      </Foldout>
                      <RowIcon $off={i.off}>{i.k ? <PrefabCube /> : <Cube />}</RowIcon>
                      <RowText>{i.t}</RowText>
                      <RowEnd>
                        {i.cam && (
                          <svg width="15" height="14" viewBox="0 0 15 14"><path d="M3 2l2 2 2-3 1 3M1 5h3v4H1" fill="none" stroke="#777" /><path d="M3 11l8-8 3 3v6H3z" fill="#b80000" /></svg>
                        )}
                        {i.k && <IconButton aria-label={`Open ${i.t}`}><Chevron /></IconButton>}
                      </RowEnd>
                    </Row>
                  ))}
                  <Row $level={0} $prefab>
                    <Foldout as="span" />
                    <RowIcon><PrefabCube /></RowIcon>
                  </Row>
                </Tree>
                <ScrollTrack>
                  <svg width="8" height="5"><path d="M0 5h8L4 0z" fill="#c4c4c4" /></svg>
                  <ScrollBody><Thumb /></ScrollBody>
                  <svg width="8" height="5"><path d="M0 0h8L4 5z" fill="#c4c4c4" /></svg>
                </ScrollTrack>
              </TreeArea>
            </Panel>

            <Panel>
              <TabStrip>
                <Tab $active $focus $w={77}>
                  <svg width="14" height="12" viewBox="0 0 14 12" stroke="#c4c4c4" strokeWidth="1.200"><path d="M5.500 0v12M9.500 0v12M2 3.500h11M2 7.500h11" /></svg>
                  Scene
                </Tab>
                <Tab $w={70}>
                  <svg width="15" height="10" viewBox="0 0 15 10"><path d="M4 1h7a4 4 0 0 1 0 8q-2 0-3.500-1.500Q6 9 4 9a4 4 0 0 1 0-8z" fill="#c4c4c4" /><path d="M4 3v4M2 5h4" stroke="#282828" /><path d="M9.500 5h1.500v1.500H9.500zM11.500 3H13v1.500h-1.500z" fill="#282828" /></svg>
                  Game
                </Tab>
                <TabActions><IconButton aria-label="More"><Kebab /></IconButton></TabActions>
              </TabStrip>
              <SceneTools $h={26}>
                <SceneButton $w={75}>Center</SceneButton>
                <SceneButton $w={67}>
                  <svg width="16" height="16" viewBox="0 0 16 16" fill="none" stroke="#b4b4b4" strokeWidth="1.200"><path d="M10 14l-3 1-6-3V4l6-3 6 3v4M1 4l6 3 6-3M7 7v8" /><circle cx="11.500" cy="12" r="2.800" stroke="#e8663d" strokeWidth="1.500" /></svg>
                  Local
                  <Space $w={14} />
                </SceneButton>
                <Space $w={12} />
                <Split><SceneButton $w={22} $tone="blue" aria-label="Grid" /><SceneButton $w={14} $tone="blue" aria-label="Grid options" /></Split>
                <Split><SceneButton $w={22} $tone="dim" aria-label="Snap" /><SceneButton $w={14} $tone="dim" aria-label="Snap options" /></Split>
                <SceneButton $w={36} aria-label="Snap increment" />
                <Space />
                <SceneButton $w={36} aria-label="Draw mode" />
                <SceneButton $w={32} aria-label="2D" />
                <SceneButton $w={32} $tone="blue" aria-label="Lighting" />
                <SceneButton $w={32} aria-label="Audio" />
                <Split><SceneButton $w={22} $tone="blue" aria-label="Effects" /><SceneButton $w={14} $tone="blue" aria-label="Effect options" /></Split>
                <SceneButton $w={32} $tone="blue" aria-label="Visibility" />
                <SceneButton $w={36} aria-label="Camera" />
                <Split>
                  <SceneButton $w={22} $tone="blue" aria-label="Gizmos">
                    <svg width="15" height="15" viewBox="0 0 15 15" fill="none" stroke="#f0f0f0" strokeWidth="1.300"><circle cx="7.500" cy="7.500" r="5.900" /><path d="M7.500 1.500Q3 7 8.500 13.500M7.500 1.500q4 3 2 7M1.500 8q5 2 12-1" /><circle cx="7.500" cy="1.800" r="1" fill="#fff" /><circle cx="1.800" cy="7" r="1" fill="#fff" /><circle cx="9.500" cy="8.500" r="1.200" fill="#fff" /></svg>
                  </SceneButton>
                  <SceneButton $w={14} $tone="blue" aria-label="Gizmo options" />
                </Split>
              </SceneTools>
              <Viewport>
                <SceneLines />
                <ToolPalette>
                  <PaletteButton aria-label="View tool">
                    <svg width="16" height="16" viewBox="0 0 16 16" fill="none" stroke="#c8c8c8" strokeWidth="1.900" strokeLinecap="round"><path d="M4.500 9L3.500 3M7 8V1.200M9.500 8l.5-6.500M11.800 9L13 4M5 12L1.300 8.200" /><path d="M4.500 8h7.500l-1 5q-2.500 2-5 0z" fill="#c8c8c8" /></svg>
                  </PaletteButton>
                  <PaletteButton $on aria-label="Move tool">
                    <svg width="16" height="16" viewBox="0 0 16 16" fill="none" stroke="#e8e8e8" strokeWidth="1.400"><path d="M8 1v5M8 10v5M1 8h5M10 8h5M5.700 3.300L8 1l2.300 2.300M5.700 12.700L8 15l2.300-2.300M3.300 5.700L1 8l2.300 2.300M12.700 5.700L15 8l-2.300 2.300" /></svg>
                  </PaletteButton>
                  {["Rotate", "Scale", "Rect", "Transform"].map((t) => <PaletteButton key={t} aria-label={`${t} tool`} />)}
                </ToolPalette>
                <AxisGizmo />
              </Viewport>
            </Panel>
          </UpperArea>

          <Panel>
            <TabStrip>
              <Tab $w={82}>
                <svg width="13" height="11" viewBox="0 0 13 11"><path d="M1 1h4l1.500 2H13v8H1z" fill="#c4c4c4" /></svg>
                Project
              </Tab>
              <Tab $active $w={86}>
                <svg width="13" height="12" viewBox="0 0 13 12"><path d="M2 0h10v11H2z" fill="#c4c4c4" /><path d="M3 2.500h6M3 4.500h8M3 6.500h6M3 8.500h8" stroke="#3c3c3c" /></svg>
                Console
              </Tab>
              <TabActions><IconButton aria-label="More"><Kebab /></IconButton></TabActions>
            </TabStrip>
            <ConsoleTools $h={21}>
              <ConsoleButton $w={39}>Clear</ConsoleButton>
              <ConsoleButton $w={18} aria-label="Clear options"><Down /></ConsoleButton>
              <ConsoleButton $w={59}>Collapse</ConsoleButton>
              <ConsoleButton $w={74} $on>Error Pause</ConsoleButton>
              <ConsoleButton $w={51}>Editor <Down /></ConsoleButton>
              <ConsoleSearch $h={16}><Magnifier /><input aria-label="Search console" /></ConsoleSearch>
              <ConsoleButton $w={34} $on>
                <svg width="14" height="14" viewBox="0 0 14 14"><circle cx="7" cy="7" r="6.500" fill="#808080" /><path d="M9 12l4 2-.5-5z" fill="#808080" /><path d="M7 3v5M7 9.500V11" stroke="#444" strokeWidth="1.500" /></svg>0
              </ConsoleButton>
              <ConsoleButton $w={34}>
                <svg width="14" height="13" viewBox="0 0 14 13"><path d="M7 0l7 13H0z" fill="#9a9a9a" /><path d="M7 4v5M7 10v1.500" stroke="#333" strokeWidth="1.500" /></svg>0
              </ConsoleButton>
              <ConsoleButton $w={34} $on>
                <svg width="14" height="14" viewBox="0 0 14 14"><path d="M4 0h6l4 4v6l-4 4H4l-4-4V4z" fill="#d0d0d0" /><path d="M7 3v5M7 9.500V11" stroke="#444" strokeWidth="1.500" /></svg>0
              </ConsoleButton>
            </ConsoleTools>
            <ConsoleBody><ConsoleList /><div /></ConsoleBody>
          </Panel>
        </LeftArea>

        <Panel>
          <TabStrip>
            <Tab $active $w={93}>
              <svg width="13" height="12" viewBox="1 0 13 12"><circle cx="8" cy="6" r="5.200" fill="#c4c4c4" /><path d="M8 2.500V4M7 5.500h1.200V9M6.700 9h2.800" stroke="#3c3c3c" strokeWidth="1.300" fill="none" /></svg>
              Inspector
            </Tab>
            <TabActions><IconButton aria-label="Lock"><Lock /></IconButton><IconButton aria-label="More"><Kebab /></IconButton></TabActions>
          </TabStrip>
        </Panel>
      </Workspace>

      <StatusBar>
        <StatusButton aria-label="Debugger"><svg width="15" height="15" viewBox="0 0 15 15" stroke="#c4c4c4" fill="#c4c4c4"><ellipse cx="7.500" cy="8" rx="3.500" ry="5" /><path d="M1 4l3 2M1 8h3M1 13l3-2M14 4l-3 2M14 8h-3M14 13l-3-2M5 1l2 2M10 1L8 3" /><path d="M1 1l13 13" stroke="#191919" strokeWidth="2.500" /><path d="M2 1l12 13" /></svg></StatusButton>
        <StatusButton aria-label="Cache server"><svg width="15" height="15" viewBox="0 0 15 15" fill="#c4c4c4"><ellipse cx="7.500" cy="3.500" rx="5.500" ry="2.500" /><path d="M2 6q5.500 3 11 0v2q-5.500 3-11 0zM2 10q5.500 3 11 0v2q-5.500 3-11 0z" /><path d="M1 1l13 13" stroke="#191919" strokeWidth="2.500" /><path d="M2 1l12 13" stroke="#c4c4c4" /></svg></StatusButton>
        <StatusButton aria-label="Auto generate lighting"><svg width="15" height="15" viewBox="0 0 15 15" fill="none" stroke="#c4c4c4" strokeWidth="1.300"><path d="M2 9a5.700 5.700 0 0 0 9 4M13 6A5.700 5.700 0 0 0 4 2M10 1h3v3M5 14H2v-3" /><circle cx="7.500" cy="7.500" r="2.800" fill="#c4c4c4" /><path d="M1 1l13 13" /></svg></StatusButton>
        <StatusButton aria-label="Progress"><svg width="15" height="15" viewBox="0 0 15 15" fill="none" stroke="#c4c4c4" strokeWidth="1.200"><circle cx="7.500" cy="7.500" r="6.600" /><path d="M4.500 7.500l2.300 2L10.500 6" /></svg></StatusButton>
      </StatusBar>

      <Taskbar>
        <StartButton aria-label="Start"><svg width="16" height="16" viewBox="0 0 16 16" fill="#fff"><path d="M0 2.300L6.700 1.300v6.300H0zM7.500 1.200L16 0v7.600H7.500zM0 8.400h6.700v6.300L0 13.700zM7.500 8.400H16V16l-8.500-1.200z" /></svg></StartButton>
        <TaskSearch>
          <svg width="17" height="17" viewBox="0 0 17 17" fill="none" stroke="#fff" strokeWidth="1.300"><circle cx="10.500" cy="6" r="5.300" /><path d="M6.700 9.800L.7 16.200" /></svg>
          <input aria-label="Cerca" placeholder="Scrivi qui il testo da cercare." />
          <Camels />
        </TaskSearch>
        {tasks.map(([name, icon, open, active]) => (
          <TaskButton key={name} aria-label={name} $open={open} $active={active}>{icon}</TaskButton>
        ))}
        <Tray>
          <Weather>
            <svg width="23" height="21" viewBox="0 0 23 21"><circle cx="10" cy="10" r="10" fill="#f59324" /><path d="M2 4a10 10 0 0 1 16 0Q9 2 2 12z" fill="#fbbf3a" /><path d="M10 17.500a3.500 3.500 0 0 1 1-6 4 4 0 0 1 7-1 3.500 3.500 0 0 1 2 7z" fill="#cbdcf8" /></svg>
            <span>27°C</span><span>Soleggiato</span>
          </Weather>
          <TrayButton $w={26} aria-label="Hidden icons"><svg width="12" height="8" fill="none" stroke="#fff" strokeWidth="1.300"><path d="M1 7l5-5 5 5" /></svg></TrayButton>
          <TrayButton $w={24} aria-label="Meet now"><svg width="12" height="16" viewBox="1 0 12 16" fill="none" stroke="#fff" strokeWidth="1.200"><rect x="1.500" y="4.500" width="7" height="7" rx="1" /><path d="M8.500 7l3-2v6l-3-2M3 2q3.500-2 7 0M3 14q3.500 2 7 0" /></svg></TrayButton>
          <TrayButton $w={24} aria-label="Network"><svg width="14" height="14" viewBox="0 0 14 14" fill="none" stroke="#fff" strokeWidth="1.200"><path d="M1 13A12 12 0 0 1 13 1M4.500 13A8.500 8.500 0 0 1 13 4.500M8 13a5 5 0 0 1 5-5" /><circle cx="11.500" cy="12" r="1.500" fill="#fff" stroke="none" /></svg></TrayButton>
          <TrayButton $w={24} aria-label="Volume"><svg width="17" height="14" viewBox="0 0 17 14" fill="none" stroke="#fff" strokeWidth="1.200"><path d="M1 5h2.500L7 2v10L3.500 9H1zM9 5q1.500 2 0 4M11.500 3q3 4 0 8M13.500 1q4.500 6 0 12" /></svg></TrayButton>
          <TrayButton $w={24} aria-label="Microphone"><svg width="12" height="17" viewBox="0 0 12 17"><rect x="3" width="6" height="11" rx="1" fill="#fff" /><path d="M1 8v2.500Q2 13 6 13t5-2.500V8M6 13v3M3 16.300h6" fill="none" stroke="#fff" /></svg></TrayButton>
          <TrayButton $w={26} aria-label="Input indicator"><svg width="17" height="16" viewBox="0 0 17 16"><path d="M1 3l14-2v12M1 3v10h9M5 10l6-5M5 6v4h4M8 4.500h3V8" fill="none" stroke="#fff" strokeWidth="1.200" /><circle cx="13" cy="12" r="4" fill="#e81123" /></svg></TrayButton>
          <TrayButton $w={32}>ENG</TrayButton>
          <Clock>20:15<br />07/09/2023</Clock>
          <Notice aria-label="12 notifications">
            <svg width="28" height="28" viewBox="0 0 28 28"><path d="M2 4h16v12H9l-4 3v-3H2z" fill="#fff" /><path d="M5 7.500h10M5 10h10M5 12.500h6" stroke="#1b2a47" /><circle cx="17" cy="19" r="8" fill="#3a3f48" stroke="#7f858e" /><text x="17" y="23" fontSize="11" fontWeight="600" fill="#fff" textAnchor="middle">12</text></svg>
          </Notice>
          <DesktopEdge />
        </Tray>
      </Taskbar>
    </Shell>
  );
}
